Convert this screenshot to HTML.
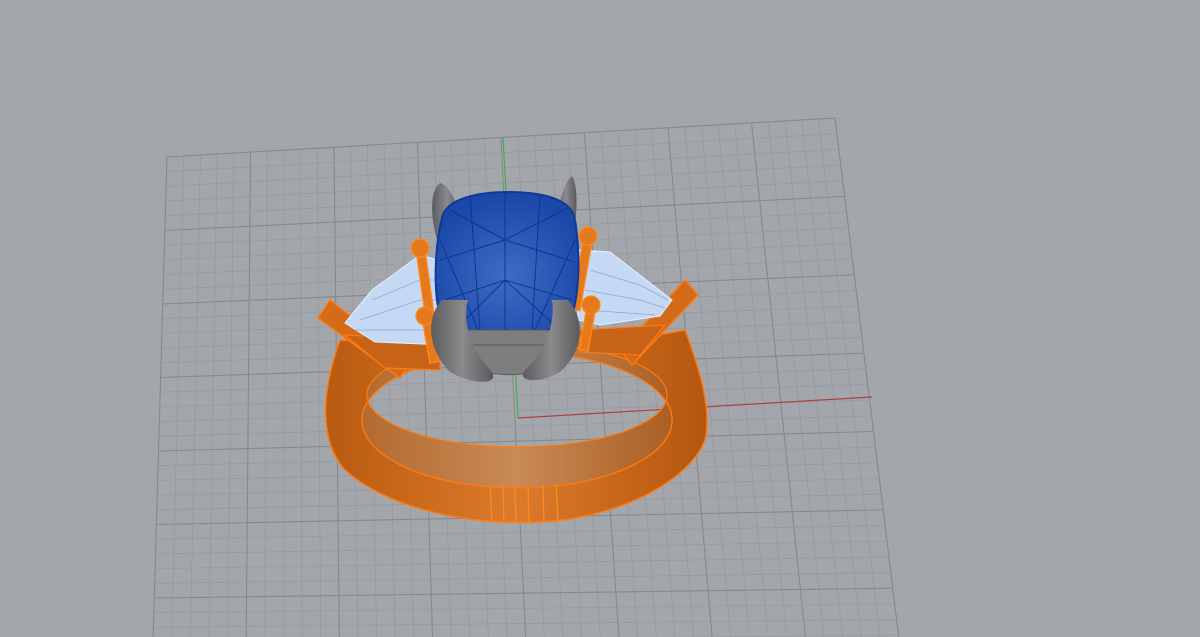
<!DOCTYPE html>
<html><head><meta charset="utf-8"><style>
html,body{margin:0;padding:0;background:#a3a7ac;overflow:hidden;width:1200px;height:637px}
svg{display:block}
</style></head><body>
<svg id="s" width="1200" height="637" viewBox="0 0 1200 637" xmlns="http://www.w3.org/2000/svg">
<defs>
<clipPath id="c"><rect width="1200" height="637"/></clipPath>
<linearGradient id="band" x1="0" x2="1" y1="0" y2="0">
<stop offset="0" stop-color="#b85a10"/><stop offset="0.5" stop-color="#dc7b2a"/><stop offset="1" stop-color="#b4560e"/>
</linearGradient>
<linearGradient id="inner" x1="0" x2="1">
<stop offset="0" stop-color="#b36a30"/><stop offset="0.5" stop-color="#c98a56"/><stop offset="1" stop-color="#a95f24"/>
</linearGradient>
<radialGradient id="gem" cx="0.5" cy="0.6" r="0.6">
<stop offset="0" stop-color="#3d6cc4"/><stop offset="1" stop-color="#1a47a8"/>
</radialGradient>
<linearGradient id="prong" x1="0" x2="1"><stop offset="0" stop-color="#5c5c5e"/><stop offset="0.5" stop-color="#8a8a8c"/><stop offset="1" stop-color="#5a5a5c"/></linearGradient>
</defs>
<g id="grid" clip-path="url(#c)"></g>
<line x1="503" y1="137" x2="518" y2="418" stroke="#3fb04a" stroke-width="1.2"/>
<line x1="518" y1="418" x2="872" y2="397" stroke="#b04040" stroke-width="1.2"/>
<!-- band -->
<path fill-rule="evenodd" d="M340 340 C322 390 318 440 345 470 C390 510 470 525 540 522 C620 518 690 480 705 440 C712 410 700 370 685 330 C620 345 420 345 340 340 Z M362 420 A155 68 0 1 0 672 420 A155 68 0 1 0 362 420 Z" fill="url(#band)" stroke="#ff7a10" stroke-width="1.5"/>
<path fill-rule="evenodd" d="M362 420 A155 68 0 1 0 672 420 A155 68 0 1 0 362 420 Z M367 395 A150 52 0 1 0 667 395 A150 52 0 1 0 367 395 Z" fill="url(#inner)" stroke="#ff7a10" stroke-width="1.2"/>
<g stroke="#ff8a20" stroke-width="1.2"><line x1="490" y1="485" x2="492" y2="523"/><line x1="503" y1="486" x2="504" y2="524"/><line x1="515" y1="486" x2="516" y2="524"/><line x1="528" y1="486" x2="529" y2="524"/><line x1="543" y1="485" x2="544" y2="523"/><line x1="556" y1="484" x2="558" y2="521"/></g>
<!-- shoulders -->
<path d="M318 318 L330 300 L410 362 L400 378 Z" fill="#d46b18" stroke="#ff7a10" stroke-width="1.5"/>
<path d="M620 350 L685 280 L698 295 L632 365 Z" fill="#d46b18" stroke="#ff7a10" stroke-width="1.5"/>
<path d="M345 335 L440 340 L440 370 L385 368 Z" fill="#c76318" stroke="#ff7a10" stroke-width="1.2"/>
<path d="M580 330 L665 325 L640 355 L580 352 Z" fill="#c76318" stroke="#ff7a10" stroke-width="1.2"/>
<!-- side stones -->
<path d="M345 323 L372 290 L420 255 L445 262 L445 345 L375 342 Z" fill="#c5d9f5" stroke="#e8f0ff" stroke-width="1"/>
<path d="M578 250 L610 252 L672 300 L660 316 L600 325 L578 320 Z" fill="#c5d9f5" stroke="#e8f0ff" stroke-width="1"/>
<g stroke="#8fa8d0" stroke-width="0.8" fill="none">
<path d="M360 320 L420 300 L445 300"/><path d="M372 300 L420 280 L445 280"/><path d="M355 330 L445 330"/>
<path d="M590 270 L640 285 L668 300"/><path d="M585 290 L640 300 L665 308"/><path d="M585 310 L655 315"/>
</g>
<!-- small prongs -->
<g fill="#e57a1c" stroke="#ff8a20" stroke-width="1.2">
<rect x="416" y="250" width="9" height="75" transform="rotate(-8 420 250)"/><circle cx="420" cy="248" r="9"/>
<rect x="584" y="236" width="9" height="75" transform="rotate(10 588 236)"/><circle cx="588" cy="236" r="9"/>
<rect x="422" y="318" width="9" height="45" transform="rotate(-10 426 318)"/><circle cx="425" cy="316" r="9"/>
<rect x="587" y="306" width="9" height="45" transform="rotate(10 591 306)"/><circle cx="591" cy="305" r="9"/>
</g>
<!-- back prongs -->
<path d="M437 240 C430 215 430 190 440 183 C450 185 458 205 462 225 Z" fill="url(#prong)"/>
<path d="M555 225 C558 205 565 180 572 176 C578 185 578 215 572 240 Z" fill="url(#prong)"/>
<!-- gem -->
<path d="M442 218 C446 198 480 192 508 192 C540 192 572 198 575 220 C580 250 580 290 572 315 C562 330 540 333 508 333 C470 333 448 330 440 315 C433 290 435 245 442 218Z" fill="url(#gem)" stroke="#0e3a9a" stroke-width="2"/>
<g stroke="#0b3390" stroke-width="1" fill="none" opacity="0.9">
<path d="M450 210 L505 240 L568 208"/><path d="M440 260 L505 240 L575 262"/><path d="M445 300 L505 280 L572 300"/><path d="M505 193 L505 333"/><path d="M470 195 L480 330"/><path d="M540 195 L532 330"/><path d="M440 240 L478 330"/><path d="M575 240 L535 330"/><path d="M455 330 L505 280 L560 330"/>
</g>
<!-- gallery -->
<path d="M452 330 L562 330 L550 365 C530 378 490 378 468 365 Z" fill="#7d7e80" stroke="#5a5a5c"/>
<line x1="458" y1="345" x2="556" y2="345" stroke="#555" />
<!-- front prongs -->
<path d="M442 300 C425 318 428 350 450 372 C470 384 500 386 492 372 C470 350 462 320 468 300 Z" fill="url(#prong)"/>
<path d="M568 300 C585 318 585 350 560 372 C540 384 515 382 525 370 C548 350 555 320 552 300 Z" fill="url(#prong)"/>
</svg>
<script>
(function(){
var g=document.getElementById('grid'),ns='http://www.w3.org/2000/svg';
var TL=[167,157],TR=[835,118],BR=[912,745],BL=[150,745];
function P(u,v){var tx=TL[0]+(TR[0]-TL[0])*u,ty=TL[1]+(TR[1]-TL[1])*u,bx=BL[0]+(BR[0]-BL[0])*u,by=BL[1]+(BR[1]-BL[1])*u;return[tx+(bx-tx)*v,ty+(by-ty)*v];}
var nc=40,nr=40;
function L(a,b,maj){var l=document.createElementNS(ns,'line');l.setAttribute('x1',a[0]);l.setAttribute('y1',a[1]);l.setAttribute('x2',b[0]);l.setAttribute('y2',b[1]);l.setAttribute('stroke',maj?'#85888d':'#969a9f');l.setAttribute('stroke-width',maj?1.1:0.8);g.appendChild(l);}
for(var i=0;i<=nc;i++){L(P(i/nc,0),P(i/nc,1),i%5==0);}
for(var j=0;j<=nr;j++){L(P(0,j/nr),P(1,j/nr),j%5==0);}
})();
</script>
</body></html>
